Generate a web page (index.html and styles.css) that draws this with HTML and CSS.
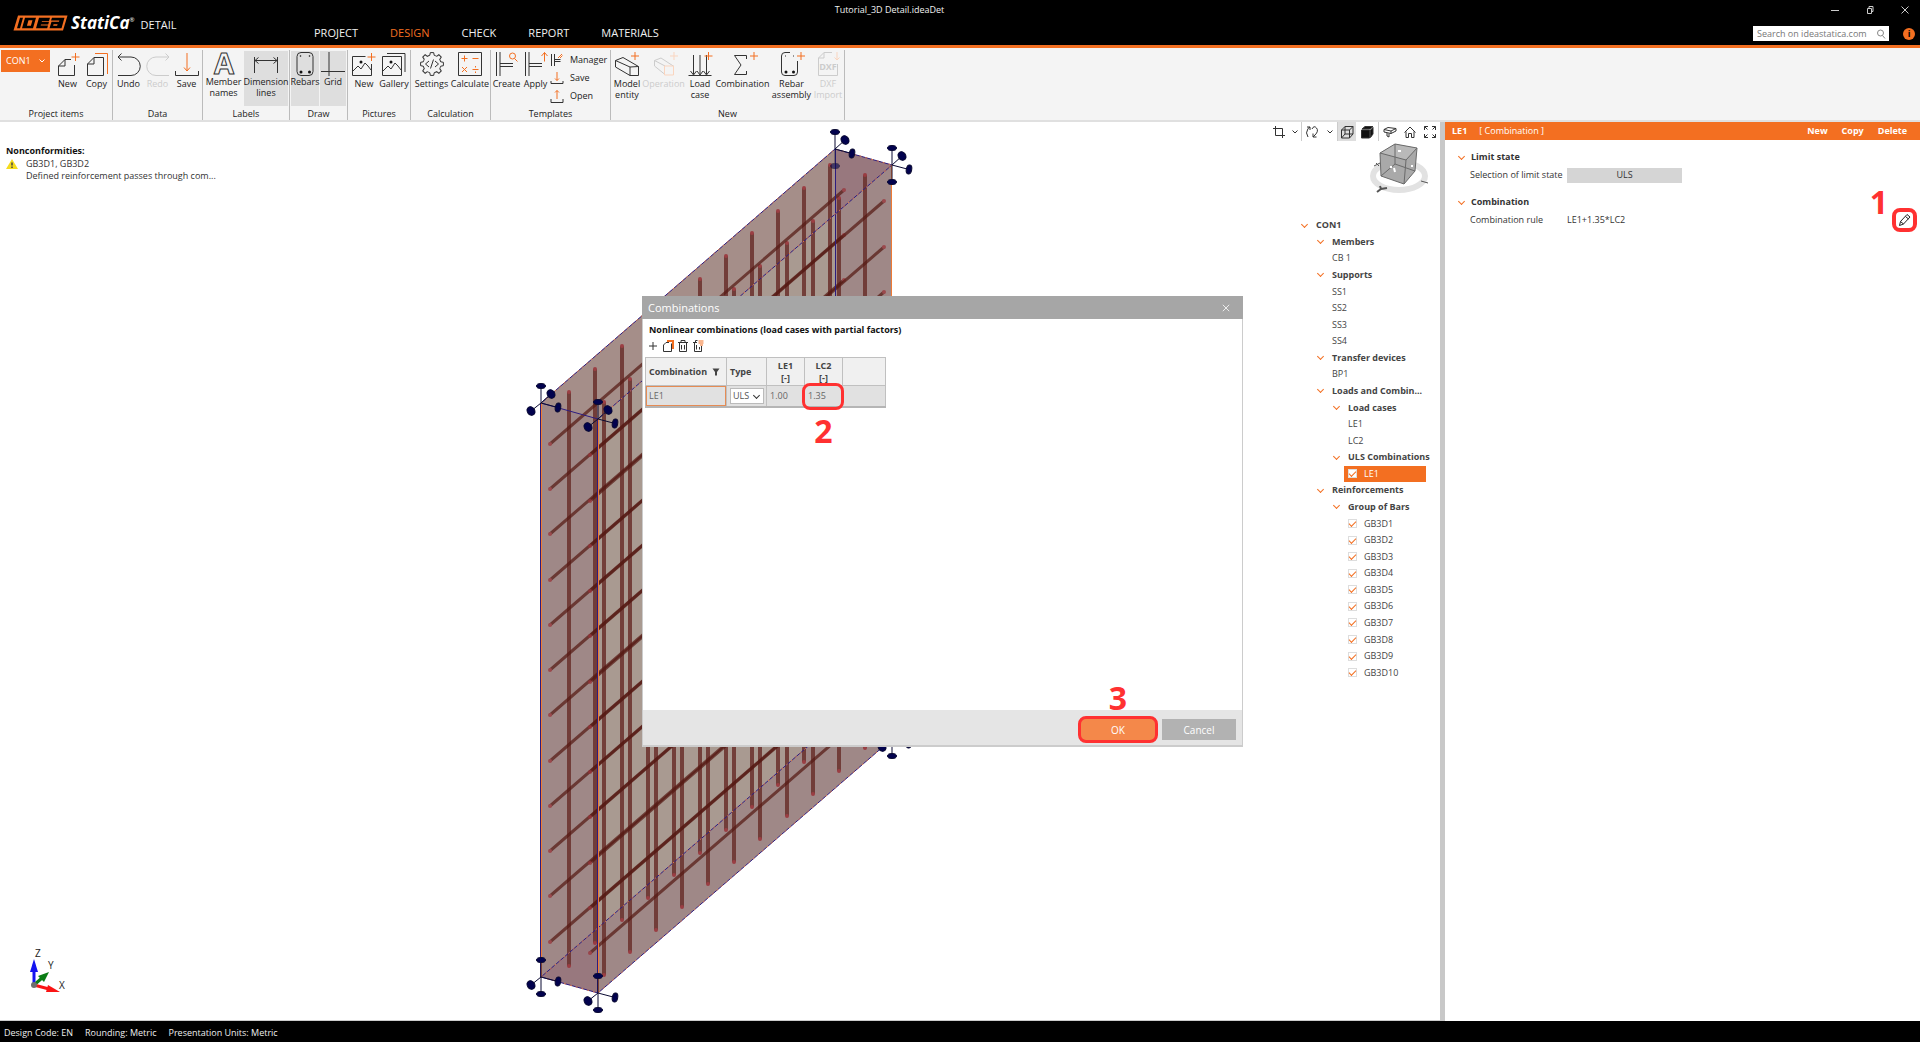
FILE: index.html
```html
<!DOCTYPE html>
<html lang="en">
<head>
<meta charset="utf-8">
<title>Tutorial_3D Detail.ideaDet</title>
<link rel="stylesheet" href="styles.css">
</head>
<body>
<header class="titlebar">
  <div class="brand">
    <svg class="brand-mark" viewBox="0 0 55 20" preserveAspectRatio="none" aria-hidden="true">
      <path class="mark-fill" d="M5 .5H54.500L50 19.500H.5Z"/>
      <path class="mark-cut" d="M7 3.500h3L7 16.500H4ZM12 3.500h11l-3 13H9ZM26 3.500h11l-1 4H29l-.3 1H36l-.8 3.500H28l-.3 1H35l-.8 3.500H23ZM39 3.500h12.500l-3 13H36.500l2-8H46l.3-1.500H38Z"/>
      <path class="mark-fill" d="M15.500 6.500h4l-1.600 7h-4ZM40.600 11.500h4l-.5 2h-4Z"/>
    </svg>
    <span class="brand-name">StatiCa<sup>®</sup></span>
    <span class="brand-product">DETAIL</span>
  </div>
  <div class="titlebar-middle">
    <h1 class="doc-title">Tutorial_3D Detail.ideaDet</h1>
    <nav class="tabs">
      <a href="#project">PROJECT</a>
      <a href="#design" class="active">DESIGN</a>
      <a href="#check">CHECK</a>
      <a href="#report">REPORT</a>
      <a href="#materials">MATERIALS</a>
    </nav>
  </div>
  <div class="titlebar-right">
    <div class="window-controls">
      <button aria-label="Minimize"><svg viewBox="0 0 10 10"><path d="M1 5.500h8"/></svg></button>
      <button aria-label="Restore"><svg viewBox="0 0 10 10"><path d="M2.500 3.500h4v5h-4ZM4 3.500V1.500h4v5H6.500"/></svg></button>
      <button aria-label="Close"><svg viewBox="0 0 10 10"><path d="M1.500 1.500l7 7M8.500 1.500l-7 7"/></svg></button>
    </div>
    <div class="search-row">
      <div class="search">
        <input type="text" placeholder="Search on ideastatica.com" aria-label="Search on ideastatica.com">
        <svg viewBox="0 0 10 10"><circle cx="4.500" cy="4" r="3"/><path d="M6.500 6.500L9 9.500"/></svg>
      </div>
      <button class="info" aria-label="Information">i</button>
    </div>
  </div>
</header>

<section class="ribbon" aria-label="Ribbon">
  <div class="group">
    <div class="tools">
      <button class="con">CON1 <svg viewBox="0 0 8 8"><path d="M1.500 2.500L4 5l2.500-2.500"/></svg></button>
      <button class="tool w29"><svg viewBox="0 0 24 24"><path d="M15 7.500H9L2.500 14V23.500H18.500V13M9 7.500V14H2.500"/><path class="o" d="M19.500 1v8M15.500 5h8"/></svg>New</button>
      <button class="tool w29"><svg viewBox="0 0 24 24"><path d="M18.500 5.500H9L2.500 12V23.500H18.500ZM9 5.500V12H2.500"/><path class="o" d="M10 1.500H22.500V22"/></svg>Copy</button>
    </div>
    <h2>Project items</h2>
  </div>
  <div class="group">
    <div class="tools">
      <button class="tool w29"><svg viewBox="0 0 24 24"><path d="M1 5H14a9.200 9.200 0 0 1 0 18.500H1M4.500 1.500L1 5l3.500 3.500"/></svg>Undo</button>
      <button class="tool w29" disabled><svg viewBox="0 0 24 24"><path d="M23 5H10a9.200 9.200 0 0 0 0 18.500H23M19.500 1.500L23 5l-3.500 3.500"/></svg>Redo</button>
      <button class="tool w29"><svg viewBox="0 0 24 24"><path d="M.5 19v4.500h23V19"/><path class="o" d="M12 1V19M9 15.500l3 3.500 3-3.500"/></svg>Save</button>
    </div>
    <h2>Data</h2>
  </div>
  <div class="group tight">
    <div class="tools">
      <button class="tool w39"><svg viewBox="0 0 24 24"><text class="letter" x="12" y="22" text-anchor="middle">A</text></svg>Member<br>names</button>
      <button class="tool w44 on"><svg viewBox="0 0 24 24"><path d="M.5 5v16M23.500 5v16M1 8.500H23M4.500 5.500L1 8.500l3.500 3M19.500 5.500l3.500 3-3.500 3"/></svg>Dimension<br>lines</button>
    </div>
    <h2>Labels</h2>
  </div>
  <div class="group tight">
    <div class="tools">
      <button class="tool w28 on"><svg viewBox="0 0 24 24"><rect x="4" y=".5" width="16" height="23" rx="4"/><circle cx="7.500" cy="4" r=".5"/><circle cx="16.500" cy="4" r=".5"/><circle class="k" cx="8" cy="20" r="1.500"/><circle class="k" cx="16.500" cy="20" r="1.500"/></svg>Rebars</button>
      <button class="tool w26 on"><svg viewBox="0 0 24 24"><path d="M8 0v24M0 19.500h24"/></svg>Grid</button>
    </div>
    <h2>Draw</h2>
  </div>
  <div class="group">
    <div class="tools">
      <button class="tool w30"><svg viewBox="0 0 24 24"><path d="M13.500 4.500H.5v19h19V12M1 19l5-5 3 3 4-6 3 3 3 4"/><circle class="k" cx="9" cy="10" r="1.500"/><path class="o" d="M19.500 1v8M15.500 5h8"/></svg>New</button>
      <button class="tool w30"><svg viewBox="0 0 24 24"><path d="M.5 4.500h19v19H.5ZM5 1.500H23V20M1 19l5-5 3 3 4-6 3 3 3 4"/><circle class="k" cx="9" cy="10" r="1.500"/></svg>Gallery</button>
    </div>
    <h2>Pictures</h2>
  </div>
  <div class="group">
    <div class="tools">
      <button class="tool w39"><svg viewBox="0 0 24 24"><defs><path id="tooth" d="M9.800 3.300L10.300.6h3.400l.5 2.700A9 9 0 0 1 16.600 4.300"/></defs><use href="#tooth"/><use href="#tooth" transform="rotate(45 12 12)"/><use href="#tooth" transform="rotate(90 12 12)"/><use href="#tooth" transform="rotate(135 12 12)"/><use href="#tooth" transform="rotate(180 12 12)"/><use href="#tooth" transform="rotate(225 12 12)"/><use href="#tooth" transform="rotate(270 12 12)"/><use href="#tooth" transform="rotate(315 12 12)"/><path d="M9 9l-3.500 3L9 15M15 9l3.500 3L15 15M13.500 7.500l-3 9"/></svg>Settings</button>
      <button class="tool w38"><svg viewBox="0 0 24 24"><path d="M.5.5h23v23H.5Z"/><path class="o" d="M6.500 3.500v6M3.500 6.500h6M14.500 6.500h6M4 15l5 5M9 15l-5 5M14.500 17.500h6M17.500 14v1.500M17.500 19.500v1.500"/></svg>Calculate</button>
    </div>
    <h2>Calculation</h2>
  </div>
  <div class="group">
    <div class="tools g-templates">
      <button class="tool w29"><svg viewBox="0 0 24 24"><path d="M1.500 0v24M5 0v24M5 11.500h13M5 14.500h13"/><circle class="o" cx="17.500" cy="4" r="3"/><path class="o" d="M19.500 6.500L22.500 9.500"/></svg>Create</button>
      <button class="tool w29"><svg viewBox="0 0 24 24"><path d="M1.500 0v24M5 0v24M5 11.500h13M5 14.500h13"/><path class="o" d="M20.500 9.500V.5M17.500 4l3-3.500 3 3.500"/></svg>Apply</button>
      <div class="stack">
        <button><svg viewBox="0 0 14 14"><path d="M1.500 1v12M4.500 1v12M4.500 6.500h6M4.500 8.500h6"/><path class="o" d="M8 5l4-4M10 5l2.500-2.500"/></svg>Manager</button>
        <button><svg viewBox="0 0 14 14"><path d="M1 10v2.500h12V10"/><path class="o" d="M7 1v8.500M5 7.500l2 2 2-2"/></svg>Save</button>
        <button><svg viewBox="0 0 14 14"><path d="M1 10v3.500h12V10"/><path class="o" d="M7 10V1.500M5 3.500l2-2 2 2"/></svg>Open</button>
      </div>
    </div>
    <h2>Templates</h2>
  </div>
  <div class="group">
    <div class="tools">
      <button class="tool w30"><svg viewBox="0 0 24 24"><path d="M15 15L.5 8.500 8 5.500 23.500 14.500ZM.5 8.500V15L15 23.500h8.500V14.500M15 15v8.500"/><path class="o" d="M20 0v8M16 4h8"/></svg>Model<br>entity</button>
      <button class="tool w43" disabled><svg viewBox="0 0 24 24"><path d="M13 14L2.500 8.500 9 6l13 8.500M2.500 8.500V14L13 22.500"/><path class="o" d="M12.500 14h9v9h-9ZM22 0v8M18 4h8"/></svg>Operation</button>
      <button class="tool w30"><svg viewBox="0 0 24 24"><path d="M.5 23.500h23M5.500 3v19M12 3v19M18.500 3v19M2.500 19l3 4 3-4M9 19l3 4 3-4M15.500 19l3 4 3-4"/><path class="o" d="M20.500 0v8M16.500 4h8"/></svg>Load<br>case</button>
      <button class="tool w55"><svg viewBox="0 0 24 24"><path d="M15.500 7V3.500H3.500L10 13 3.500 22.500h12V19"/><path class="o" d="M23 0v8M19 4h8"/></svg>Combination</button>
      <button class="tool w43"><svg viewBox="0 0 24 24"><path d="M10 .5H5Q1.500.5 1.500 4V20Q1.500 23.500 5 23.500H14Q17.500 23.500 17.500 20V9"/><circle class="k" cx="6" cy="20" r="1.500"/><circle class="k" cx="13.500" cy="20" r="1.500"/><path d="M5 4h1M13 4h1"/><path class="o" d="M21 0v8M17 4h8"/></svg>Rebar<br>assembly</button>
      <button class="tool w30" disabled><svg viewBox="0 0 24 24"><path d="M16 .5H8L2.500 6V23.500H21.500V12M8 .5V6H2.500"/><text class="dxf" x="12" y="18" text-anchor="middle">DXF</text><path class="o" d="M21 0v8M18.500 5.500l2.500 2.500 2.500-2.500"/></svg>DXF<br>Import</button>
    </div>
    <h2>New</h2>
  </div>
</section>

<main class="workspace">
  <section class="viewport" aria-label="3D view">
    <svg class="scene" viewBox="0 122 1440 898">
      <defs>
        <marker id="tip" viewBox="-2 -2 4 4" markerWidth="4" markerHeight="4" markerUnits="userSpaceOnUse"><circle r="2" class="bar-tip"/></marker>
        <g id="up"><path d="M0 0V-17"/><ellipse cy="-17" rx="4.500" ry="2.500"/></g>
        <g id="down"><path d="M0 0V17"/><ellipse cy="17" rx="4.500" ry="2.500"/></g>
        <g id="far"><path d="M0 0L10-9"/><ellipse cx="10" cy="-9" rx="3.700" ry="4.500" transform="rotate(-35 10 -9)"/></g>
        <g id="near"><path d="M0 0L-10 8"/><ellipse cx="-10" cy="8" rx="3.700" ry="4.500" transform="rotate(-35 -10 8)"/></g>
        <g id="side"><path d="M0 0L17 4.500"/><ellipse cx="17" cy="4.500" rx="2.700" ry="4.500" transform="rotate(12 17 4.500)"/></g>
      </defs>
      <path fill="#9f8887" d="M541 403L835 149 892 165V739L598 993 541 977Z"/>
      <path fill="#a58e89" d="M541 403L835 149 835 214 598 419Z"/>
      <path fill="#a99a91" d="M598 419L835 214V723L598 928Z"/>
      <path fill="#98787e" d="M835 149L892 165 835 214ZM541 977L598 928V993Z"/>
      <g class="posts">
        <path d="M569 392v574M595 369v574M622 346v574M648 324v574M674 301v574M700 279v574M726 256v574M752 233v574M778 211v574M804 188v574M830 165v574"/>
        <path d="M604 402v573M630 379v573M656 357v573M682 334v573M708 311v573M734 289v573M760 266v573M787 243v573M813 221v573M839 198v573M865 175v573"/>
      </g>
      <g class="rails">
        <path d="M550 444l294-254M550 489l294-254M550 534l294-254M550 580l294-254M550 625l294-254M550 670l294-254M550 715l294-254M550 761l294-254M550 806l294-254M550 851l294-254M550 896l294-254M550 942l294-254"/>
        <path d="M590 455l294-254M590 501l294-254M590 546l294-254M590 591l294-254M590 636l294-254M590 682l294-254M590 727l294-254M590 772l294-254M590 817l294-254M590 863l294-254M590 908l294-254M590 953l294-254"/>
      </g>
      <g class="edge-line">
        <path d="M540.500 403V977M835.500 149V300M597.500 419V993"/>
        <path d="M541 403L835 149 892 165 598 419ZM541 977L598 993 892 739M541 977L835 723"/>
      </g>
      <path class="edge-orange" d="M598.500 419V993M891.500 165V739M541.500 403V977"/>
      <path class="edge-dash" d="M541 403L835 149 892 165 598 419M541 977L598 993 892 739M541 977L835 723"/>
      <g class="supports">
        <g transform="translate(541 403)"><use href="#up"/><use href="#far"/><use href="#near"/><use href="#side"/></g>
        <g transform="translate(598 419)"><use href="#up"/><use href="#far"/><use href="#near"/><use href="#side"/></g>
        <g transform="translate(835 149)"><use href="#up"/><use href="#far"/><use href="#side"/><use href="#down" opacity=".6"/></g>
        <g transform="translate(892 165)"><use href="#up"/><use href="#far"/><use href="#side"/><use href="#down"/></g>
        <g transform="translate(541 977)"><use href="#up"/><use href="#near"/><use href="#side"/><use href="#down"/></g>
        <g transform="translate(598 993)"><use href="#up"/><use href="#near"/><use href="#side"/><use href="#down"/></g>
        <g transform="translate(892 739)"><use href="#near"/><use href="#side"/><use href="#down"/></g>
      </g>
      <g class="triad">
        <path stroke="#1414f0" stroke-width="3" d="M34 985V970"/><path fill="#1414f0" d="M34 959L38 972H30Z"/>
        <path stroke="#0a7d14" stroke-width="3" d="M34 985L42 978"/><path fill="#0a7d14" d="M49 972L44 982 38 976Z"/>
        <path stroke="#fa1414" stroke-width="3" d="M34 985L49 989"/><path fill="#fa1414" d="M60 992L46 992 48 985Z"/>
        <circle cx="34" cy="985" r="3" fill="#6e6e6e"/>
        <text x="35" y="957">Z</text><text x="48" y="969">Y</text><text x="59" y="989">X</text>
      </g>
    </svg>

    <div class="nonconf">
      <h2>Nonconformities:</h2>
      <div class="nonconf-item">
        <svg viewBox="0 0 12 10" aria-hidden="true"><path fill="#f5dc1e" d="M6 0L12 10H0Z"/><path stroke="#444" stroke-width="1.500" d="M6 3.500v3M6 7.500v1.500"/></svg>
        <p>GB3D1, GB3D2<br>Defined reinforcement passes through com...</p>
      </div>
    </div>

    <aside class="side">
      <div class="view-tools">
        <button class="c20" aria-label="Crop"><svg viewBox="0 0 14 14"><path d="M3.500 1v9.500H13M1 3.500h9.500V13"/></svg></button>
        <button class="c12" aria-label="Crop options"><svg class="chev" viewBox="0 0 8 8"><path d="M1.500 2.500L4 5l2.500-2.500"/></svg></button>
        <button class="c22 sep" aria-label="Rotate"><svg viewBox="0 0 14 14"><path d="M3 12Q0 8 3 3.500L5 2M5 5V2H2M7 4q2-4 4.500-1T10 10L8 12M11.500 12H8V8.500"/></svg></button>
        <button class="c14" aria-label="Rotate options"><svg class="chev" viewBox="0 0 8 8"><path d="M1.500 2.500L4 5l2.500-2.500"/></svg></button>
        <button class="c20 sep on" aria-label="Wireframe"><svg viewBox="0 0 14 14"><path d="M1.500 5h8v8h-8ZM1.500 5L5 1.500h8L9.500 5M13 1.500V9L9.500 13M5 1.500V9h8M5 9l-3.500 4"/></svg></button>
        <button class="c22" aria-label="Solid"><svg viewBox="0 0 14 14"><path fill="#111" d="M1.500 5h8v8h-8ZM2 4L5 1.500h8L10 4ZM10.500 5L13 2.500V9l-2.500 3.500Z"/></svg></button>
        <button class="c22 sep" aria-label="Clip"><svg viewBox="0 0 14 14"><path d="M1 4.500L5 2.500 13 3.500 8 6ZM1 4.500V7l7 1.500V6M13 3.500V6L8 8.500M4 8v3l2 1V8.500"/></svg></button>
        <button class="c20" aria-label="Home"><svg viewBox="0 0 14 14"><path d="M1.500 7.500L7 2l5.500 5.500M3 6.500V12.500H5.500V8.500h3v4H11V6.500"/></svg></button>
        <button class="c20" aria-label="Fit"><svg viewBox="0 0 14 14"><path d="M1.500 5V1.500H5M1.500 1.500l3 3M9 1.500h3.500V5M12.500 1.500l-3 3M1.500 9v3.500H5M1.500 12.500l3-3M9 12.500h3.500V9M12.500 12.500l-3-3"/></svg></button>
      </div>
      <svg class="nav-cube" viewBox="1366 140 68 56" role="img" aria-label="View orientation">
        <ellipse cx="1399" cy="176" rx="26" ry="14" fill="none" stroke="#e2e2e2" stroke-width="6"/>
        <path fill="#a9a9a9" d="M1380 153L1395 144 1417 148 1415 171 1404 184 1381 176Z"/>
        <path fill="#b9b9b9" d="M1380 153L1395 144 1417 148 1406 160Z"/>
        <path fill="none" stroke="#6a6a6a" d="M1380 153L1395 144 1417 148 1415 171 1404 184 1381 176ZM1380 153L1406 160 1417 148M1406 160L1404 184M1395 144V164L1381 176M1395 164L1415 171"/>
        <path fill="none" stroke="#fff" stroke-width="2" d="M1390 167h2M1394 168l1 4M1398 151h3M1412 165v2"/>
        <path fill="none" stroke="#555" d="M1374 166l6-3M1376 163l3 3M1421 181l7 2"/>
        <path fill="none" stroke="#555" stroke-width="2" d="M1377 192l4-3 6-1M1380 186l1 3"/>
      </svg>
      <ul class="tree">
        <li class="l1 branch">CON1</li>
        <li class="l2 branch">Members</li>
        <li class="l2">CB 1</li>
        <li class="l2 branch">Supports</li>
        <li class="l2">SS1</li>
        <li class="l2">SS2</li>
        <li class="l2">SS3</li>
        <li class="l2">SS4</li>
        <li class="l2 branch">Transfer devices</li>
        <li class="l2">BP1</li>
        <li class="l2 branch">Loads and Combin...</li>
        <li class="l3 branch">Load cases</li>
        <li class="l3">LE1</li>
        <li class="l3">LC2</li>
        <li class="l3 branch">ULS Combinations</li>
        <li class="l3 selected"><label><input type="checkbox" checked>LE1</label></li>
        <li class="l2 branch">Reinforcements</li>
        <li class="l3 branch">Group of Bars</li>
        <li class="l3"><label><input type="checkbox" checked>GB3D1</label></li>
        <li class="l3"><label><input type="checkbox" checked>GB3D2</label></li>
        <li class="l3"><label><input type="checkbox" checked>GB3D3</label></li>
        <li class="l3"><label><input type="checkbox" checked>GB3D4</label></li>
        <li class="l3"><label><input type="checkbox" checked>GB3D5</label></li>
        <li class="l3"><label><input type="checkbox" checked>GB3D6</label></li>
        <li class="l3"><label><input type="checkbox" checked>GB3D7</label></li>
        <li class="l3"><label><input type="checkbox" checked>GB3D8</label></li>
        <li class="l3"><label><input type="checkbox" checked>GB3D9</label></li>
        <li class="l3"><label><input type="checkbox" checked>GB3D10</label></li>
      </ul>
    </aside>

    <section class="dialog" role="dialog" aria-labelledby="dlg-title">
      <header class="dialog-head">
        <h2 id="dlg-title">Combinations</h2>
        <button aria-label="Close dialog"><svg viewBox="0 0 10 10"><path d="M1 1l8 8M9 1L1 9"/></svg></button>
      </header>
      <div class="dialog-body">
        <h3>Nonlinear combinations (load cases with partial factors)</h3>
        <div class="dialog-tools">
          <button aria-label="Add"><svg viewBox="0 0 12 12"><path d="M6 2v8M2 6h8"/></svg></button>
          <button aria-label="Copy"><svg viewBox="0 0 12 12"><path d="M9.500 3.500V11.500H1.500V5L4 2.500H7"/><path class="o w2" d="M5 1h6v8"/></svg></button>
          <button aria-label="Delete"><svg viewBox="0 0 12 12"><path d="M1 2.500h10M4 2.500V.5h4v2M2.500 2.500v9h7v-9M4.500 5v4.500M7.500 5v4.500"/></svg></button>
          <button aria-label="Delete all"><svg viewBox="0 0 12 12"><path d="M1 2.500h4M3.500 2.500V.5H5.500M2.500 2.500v9h7V6M4.500 5v4.500M7.500 7v2.500"/><path class="o" d="M6.500 1h5M6.500 3h5M8 5h3"/></svg></button>
        </div>
        <table class="grid">
          <thead>
            <tr>
              <th class="c-name"><span class="with-filter">Combination <svg viewBox="0 0 8 8"><path fill="#444" d="M.5.5h7L5 4v3.500H3V4Z"/></svg></span></th>
              <th class="c-type">Type</th>
              <th class="c-num">LE1<br>[-]</th>
              <th class="c-num">LC2<br>[-]</th>
              <th></th>
            </tr>
          </thead>
          <tbody>
            <tr>
              <td class="editing">LE1</td>
              <td class="type-cell"><select aria-label="Type"><option>ULS</option></select></td>
              <td>1.00</td>
              <td class="marked">1.35<span class="ring"></span><span class="step">2</span></td>
              <td></td>
            </tr>
          </tbody>
        </table>
      </div>
      <footer class="dialog-foot">
        <div class="ok-wrap"><button class="ok">OK</button><span class="step">3</span></div>
        <button class="cancel">Cancel</button>
      </footer>
    </section>
  </section>

  <div class="splitter"></div>

  <aside class="props">
    <header class="props-head">
      <strong>LE1</strong><span>[ Combination ]</span>
      <div class="props-actions"><button>New</button><button>Copy</button><button>Delete</button></div>
    </header>
    <section class="prop-section">
      <h2>Limit state</h2>
      <div class="prop"><span class="prop-label" id="ls">Selection of limit state</span><button class="seg" aria-describedby="ls">ULS</button></div>
    </section>
    <section class="prop-section">
      <h2>Combination</h2>
      <div class="prop"><span class="prop-label">Combination rule</span><span>LE1+1.35*LC2</span>
        <div class="edit-wrap"><button class="edit" aria-label="Edit combination rule"><svg viewBox="0 0 14 14"><path d="M1.500 12.500L2.500 8.500 9 1.500 12 4 5.500 11ZM2.500 8.500L5.500 11M7.500 3.500L10.500 6"/></svg></button><span class="step">1</span></div>
      </div>
    </section>
  </aside>
</main>

<footer class="status">
  <span>Design Code: EN</span><span>Rounding: Metric</span><span>Presentation Units: Metric</span>
</footer>
</body>
</html>
```
FILE: styles.css
```css
:root {
  --orange: #f36f21;
  --red: #ff3131;
  --ink: #333;
}
* { box-sizing: border-box; }
body {
  margin: 0;
  min-height: 100vh;
  display: flex;
  flex-direction: column;
  font: 9px/12px "Open Sans", "Noto Sans", sans-serif;
  color: var(--ink);
  background: #fff;
}
button, input, select { font: inherit; color: inherit; }
button { border: 0; padding: 0; background: none; }
h1, h2, h3, p, ul { margin: 0; padding: 0; font-size: inherit; }
ul { list-style: none; }
svg { display: block; fill: none; stroke: none; overflow: visible; }

/* title bar */
.titlebar { display: flex; height: 48px; background: #000; color: #f0f0f0; border-bottom: 3px solid var(--orange); }
.brand { display: flex; align-items: center; width: 298px; padding-left: 13px; font-size: 11px; }
.brand-mark { width: 55px; height: 16px; }
.mark-fill { fill: var(--orange); }
.mark-cut { fill: #000; }
.brand-name { margin-left: 3px; font: italic 700 17px/16px "Open Sans", sans-serif; color: #fff; }
.brand-name sup { font-size: 6px; font-weight: 400; vertical-align: 7px; line-height: 1px; }
.brand-product { margin-left: 6px; padding-top: 4px; }
.titlebar-middle { flex: 1; display: flex; flex-direction: column; }
.doc-title { text-align: center; font-weight: 400; line-height: 19px; }
.tabs { display: flex; flex: 1; font-size: 11px; line-height: 28px; }
.tabs a { color: inherit; text-decoration: none; padding: 0 16px; }
.tabs .active { color: var(--orange); box-shadow: inset 0 -2px var(--orange); }
.titlebar-right { width: 439px; display: flex; flex-direction: column; align-items: flex-end; }
.window-controls { display: flex; gap: 25px; height: 20px; align-items: center; padding-right: 10px; }
.window-controls svg { width: 10px; height: 10px; stroke: #ccc; }
.search-row { display: flex; align-items: center; gap: 14px; padding: 6px 5px 0 0; }
.search { display: flex; align-items: center; width: 136px; height: 15px; background: #fff; padding: 0 3px 0 4px; }
.search input { flex: 1; min-width: 0; border: 0; padding: 0; background: none; outline: 0; height: 15px; color: #333; }
.search input::placeholder { color: #777; opacity: 1; }
.search svg { width: 10px; height: 10px; stroke: #888; }
.info { width: 12px; height: 12px; border-radius: 50%; background: var(--orange); color: #000; font-weight: 700; line-height: 12px; }

/* ribbon */
.ribbon { display: flex; height: 74px; background: #f4f4f4; border-bottom: 2px solid #e0e0e0; padding-top: 2px; color: #222; }
.group { display: flex; flex-direction: column; justify-content: space-between; border-right: 1px solid #bbb; padding: 0 1px; }
.group h2 { font-weight: 400; text-align: center; line-height: 12px; }
.tools { display: flex; height: 56px; }
.tool { display: flex; flex-direction: column; align-items: center; flex-shrink: 0; padding-top: 2px; line-height: 11px; text-align: center; white-space: nowrap; }
.tool svg { width: 24px; height: 24px; margin-bottom: 2px; stroke: #333; }
.tool:disabled { color: #ccc; }
.tool:disabled svg { stroke: #ccc; }
.tool:disabled .o { stroke: #fad5bf; }
.tight .tools { gap: 1px; padding-top: 1px; }
.tight .tool { padding-top: 1px; }
.tight .tool svg { margin-bottom: 0; }
.on { background: #dedede; }
.o { stroke: var(--orange); }
.k { fill: #111; stroke: none; }
.w2 { stroke-width: 2; }
.letter { font: 700 29px "Open Sans", sans-serif; stroke: #333; fill: none; }
.dxf { font: 700 9px "Open Sans", sans-serif; stroke: none; fill: #ccc; }
.w26 { width: 26px; } .w28 { width: 28px; } .w29 { width: 29px; } .w30 { width: 30px; }
.w38 { width: 38px; } .w39 { width: 39px; } .w43 { width: 43px; } .w44 { width: 44px; } .w55 { width: 55px; }
.con { display: flex; align-items: center; justify-content: space-between; width: 49px; height: 22px; margin-right: 3px; padding: 0 4px 0 5px; background: var(--orange); color: #fff; }
.con svg { width: 8px; height: 8px; stroke: #fff; }
.g-templates { width: 117px; }
.stack { display: flex; flex-direction: column; padding-top: 1px; }
.stack button { display: flex; align-items: center; gap: 6px; height: 18px; }
.stack svg { width: 14px; height: 14px; stroke: #333; }

/* workspace */
.workspace { flex: 1; display: flex; min-height: 0; }
.viewport { position: relative; flex: 1; display: flex; justify-content: space-between; border-bottom: 1px solid #ccc; min-height: 899px; }
.scene { position: absolute; left: 0; top: 0; width: 1440px; height: 898px; }
.bar-tip { fill: #9a3238; }
.posts path { stroke: #6a302c; stroke-width: 4; opacity: .85; marker-start: url(#tip); marker-mid: url(#tip); marker-end: url(#tip); }
.rails path { stroke: #561a14; stroke-width: 3; opacity: .72; marker-start: url(#tip); marker-mid: url(#tip); marker-end: url(#tip); }
.edge-line { stroke: #2d1c80; }
.edge-orange { stroke: #ee7a35; }
.edge-dash { stroke: #e07a4a; stroke-dasharray: 2 4; }
.supports { stroke: #0a0a32; fill: #02024e; }
.triad text { font: 10px "Open Sans", sans-serif; fill: #222; }

.nonconf { position: relative; padding: 23px 0 0 6px; }
.nonconf h2 { font-weight: 700; color: #111; }
.nonconf-item { display: flex; gap: 8px; padding-top: 1px; }
.nonconf-item svg { width: 12px; height: 10px; margin-top: 1px; }

.side { position: relative; width: 176px; display: flex; flex-direction: column; }
.view-tools { display: flex; height: 19px; padding-left: 5px; }
.view-tools button { display: flex; align-items: center; justify-content: center; }
.view-tools svg { width: 14px; height: 14px; stroke: #333; }
.view-tools .chev { width: 8px; height: 8px; }
.c12 { width: 12px; } .c14 { width: 14px; } .c20 { width: 20px; } .c22 { width: 22px; }
.sep { border-left: 1px solid #ccc; }
.nav-cube { width: 68px; height: 56px; margin: -1px 0 0 102px; }
.tree { display: grid; grid-auto-rows: 1fr; height: 464px; margin-top: 21px; padding-left: 26px; color: #444; }
.tree li { display: flex; align-items: center; white-space: nowrap; }
.l1 { padding-left: 26px; }
.l2 { padding-left: 42px; }
.l3 { padding-left: 58px; }
.branch { font-weight: 700; }
.branch::before { content: ""; width: 4px; height: 4px; margin: -2px 9px 0 -14px; border: solid var(--orange); border-width: 0 1px 1px 0; transform: rotate(45deg); }
.tree label { display: flex; align-items: center; gap: 7px; }
.tree input { appearance: none; width: 9px; height: 9px; margin: 0; border: 1px solid #ddd; background: #fff; display: grid; place-items: center; }
.tree input:checked::before { content: ""; width: 6px; height: 3px; margin-top: -1px; border: solid var(--orange); border-width: 0 0 1px 1px; transform: rotate(-45deg); }
.tree .selected { margin-left: 54px; margin-right: 14px; padding-left: 4px; background: var(--orange); color: #fff; }

/* dialog */
.dialog { position: absolute; left: 642px; top: 174px; width: 601px; height: 451px; display: flex; flex-direction: column; background: #fff; border: solid #ccc; border-width: 0 1px 2px; }
.dialog-head { display: flex; justify-content: space-between; align-items: center; height: 23px; margin: 0 -1px; padding: 0 13px 0 6px; background: #a6a6a6; color: #fff; font-size: 11px; }
.dialog-head h2 { font-weight: 400; }
.dialog-head svg { width: 8px; height: 8px; stroke: #fff; }
.dialog-body { flex: 1; padding: 5px 2px 0; }
.dialog-body h3 { padding-left: 4px; color: #111; line-height: 12px; }
.dialog-tools { display: flex; gap: 3px; padding: 4px 0 5px 2px; }
.dialog-tools svg { width: 12px; height: 12px; stroke: #333; }
.grid { width: 241px; table-layout: fixed; border-collapse: collapse; border: 1px solid #b5b5b5; border-bottom-width: 2px; color: #444; }
.grid th { height: 28px; padding: 0 3px; text-align: left; background: #f0f0f0; border: 1px solid #c0c0c0; }
.grid td { height: 21px; padding: 0 3px; background: #e1e1e1; color: #666; border-right: 1px solid #c0c0c0; }
.c-name { width: 81px; }
.c-type { width: 40px; }
.grid .c-num { width: 38px; text-align: center; }
.with-filter { display: flex; align-items: center; justify-content: space-between; padding-right: 3px; }
.with-filter svg { width: 8px; height: 8px; }
.grid .editing { box-shadow: inset 0 0 0 1px #e58c55; }
.type-cell { position: relative; }
.type-cell select { appearance: none; display: block; width: 34px; height: 16px; padding: 0 2px; border: 1px solid #bbb; border-radius: 0; color: #555; background: #fff; }
.type-cell::after { content: ""; position: absolute; right: 7px; top: 7px; width: 4px; height: 4px; border: solid #333; border-width: 0 1px 1px 0; transform: rotate(45deg); }
.marked { position: relative; }
.ring { position: absolute; inset: -3px -2px -4px -3px; border: 3px solid var(--red); border-radius: 8px; }
.step { position: absolute; left: 50%; transform: translateX(-50%); font-size: 32px; line-height: 32px; font-weight: 700; color: var(--red); }
.marked .step { top: 29px; }
.dialog-foot { display: flex; justify-content: flex-end; gap: 4px; height: 35px; padding: 6px 6px 0 0; background: #e5e5e5; font-size: 10px; color: #fff; }
.ok-wrap { position: relative; }
.ok { width: 80px; height: 27px; border: 3px solid var(--red); border-radius: 8px; background: #f4884a; }
.ok-wrap .step { top: -34px; }
.cancel { width: 74px; height: 21px; margin-top: 3px; background: #b2b2b2; }

.splitter { width: 5px; background: #c8c8c8; }

/* property panel */
.props { width: 475px; }
.props-head { display: flex; align-items: center; gap: 12px; height: 18px; padding: 0 13px 0 7px; background: var(--orange); color: #fff; }
.props-actions { margin-left: auto; display: flex; gap: 14px; font-weight: 700; }
.prop-section { padding: 9px 3px 0 25px; }
.prop-section h2 { line-height: 16px; display: flex; align-items: center; }
.prop-section h2::before { content: ""; width: 4px; height: 4px; margin: -2px 7px 0 -11px; border: solid var(--orange); border-width: 0 1px 1px 0; transform: rotate(45deg); }
.prop { display: flex; align-items: center; height: 20px; }
.prop-label { width: 97px; }
.seg { width: 115px; height: 15px; background: #d5d5d5; }
.edit-wrap { position: relative; margin-left: auto; }
.edit { display: grid; place-items: center; width: 25px; height: 24px; border: 4px solid var(--red); border-radius: 8px; background: #fff; }
.edit svg { width: 14px; height: 14px; stroke: #222; }
.edit-wrap .step { left: -13px; top: -22px; }

.status { display: flex; gap: 12px; height: 21px; padding: 0 4px; background: #000; color: #eee; line-height: 23px; }
```
